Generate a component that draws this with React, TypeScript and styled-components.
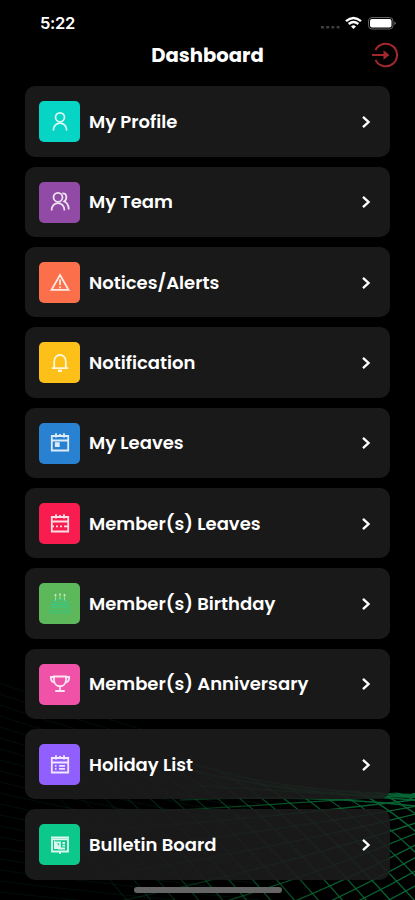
import React from 'react';
import styled, { createGlobalStyle } from 'styled-components';

const GlobalStyle = createGlobalStyle`
  * { box-sizing: border-box; }
  html, body { margin: 0; background: #000; }
  body { font-family: Poppins, Inter, 'Liberation Sans', sans-serif; color: #fff; }
`;

const Screen = styled.main`
  position: relative;
  display: flex;
  flex-direction: column;
  width: 415px;
  height: 900px;
  overflow: hidden;
  background: #000;
`;

const Backdrop = styled.svg`
  position: absolute;
  left: 0;
  bottom: 0;
`;

const StatusBar = styled.div`
  display: flex;
  align-items: center;
  justify-content: space-between;
  height: 40px;
  padding: 6px 19px 0 40px;
`;

const Clock = styled.span`
  font-family: Inter, 'Liberation Sans', sans-serif;
  font-size: 16.5px;
  font-weight: 600;
  line-height: 20px;
  letter-spacing: -0.3px;
`;

const StatusIcons = styled.svg`
  display: block;
`;

const Header = styled.header`
  display: grid;
  grid-template-columns: 1fr auto 1fr;
  align-items: center;
  height: 30px;
  padding: 0 17px;
`;

const Title = styled.h1`
  grid-column: 2;
  margin: 0;
  font-size: 19.6px;
  font-weight: 700;
  line-height: 28px;
`;

const LogoutButton = styled.button`
  justify-self: end;
  padding: 0;
  border: 0;
  background: none;
  height: 26px;
`;

const Menu = styled.nav`
  position: relative;
  display: grid;
  grid-auto-rows: 70.4px;
  gap: 9.95px;
  padding: 16.4px 25px 0;
`;

const Item = styled.a`
  display: flex;
  align-items: center;
  padding: 0.6px 17px 0 14.4px;
  border-radius: 10px;
  background: rgba(28, 28, 28, 0.88);
`;

const Tile = styled.span<{ $color: string }>`
  display: grid;
  place-items: center;
  width: 41px;
  height: 41px;
  margin-right: 8.6px;
  border-radius: 5px;
  background: ${(p) => p.$color};
`;

const Label = styled.span`
  flex: 1;
  font-size: 18px;
  font-weight: 600;
  line-height: 26px;
  white-space: nowrap;
`;

const HomeIndicator = styled.div`
  position: absolute;
  left: 134px;
  bottom: 7px;
  width: 148px;
  height: 6px;
  border-radius: 3px;
  background: #656566;
`;

const calendar = <path d="M3.8 5H20.2V19.5H3.8ZM3.8 9.5H20.2M8 2.3V6.5M12 3V6M16 2.3V6.5" />;

const icons: Record<string, React.ReactNode> = {
  profile: <><circle cx="12" cy="7.3" r="4.5" /><path d="M5.4 20.5C5.4 10.6 18.6 10.6 18.6 20.5" /></>,
  team: <><circle cx="10" cy="7.3" r="4.5" /><path d="M3.6 20.5C3.6 10.6 16.4 10.6 16.4 20.5M14.4 3.4C19 2.6 19.6 8.9 16.2 11.5C18.8 12.6 20.7 15.8 20.7 19.5" /></>,
  alert: <><path d="M12 4L20.5 18.9H3.5Z" /><path d="M12 8.5V14M12 15.5V17.2" /></>,
  bell: <><path d="M3.8 17.2H20.2M6.2 17V10.5C6.2 1.8 17.8 1.8 17.8 10.5V17" /><path d="M10 19.8H14" strokeWidth="2.4" /></>,
  leaves: <>{calendar}<path d="M7.8 12.2H10.8V15.2H7.8Z" fill="currentColor" /></>,
  members: <>{calendar}<path d="M3.8 14.3H6M8 14.3H10M12 14.3H14M16 14.3H20" /></>,
  cake: <g strokeWidth="1.1"><path d="M5.5 8.6Q12 6.6 18.5 8.6L20 12.6H4ZM4.8 10.7H19.2M4 12.6L2.6 16.5V21H21.4V16.5L20 12.6M3 15.2H21M2.6 18.2H21.4" /><path d="M7.5 4.6V8.4M12 4V7.6M16.5 4.6V8.4" stroke="#a3e6a7" /><path d="M7.5 2V4.2M12 1.4V3.6M16.5 2V4.2" stroke="#d3f8cf" strokeWidth="1.7" /></g>,
  trophy: <path d="M6 4.5H18V7.5C18 16.5 6 16.5 6 7.5ZM6 5H2.8C2.8 9 4.8 10.5 7 10.5M18 5H21.2C21.2 9 19.2 10.5 17 10.5M12 14.3V18.5M7.2 19H16.8" />,
  holiday: <>{calendar}<path d="M7 12.8H8.5M11 12.8H17M7 15.8H8.5M11 15.8H17" /></>,
  board: <><path d="M3 4.3H21M4 6.3H20V18.5H4Z" /><path d="M7 9.5H12V15H7ZM14.5 10H17M14.5 12.7H17M10 15.5H17M12 19V21" /><path d="M7 9.5L12 15H7Z" fill="currentColor" /></>,
};

const items = [
  { label: 'My Profile', icon: 'profile', color: '#06d4c4' },
  { label: 'My Team', icon: 'team', color: '#914aa6' },
  { label: 'Notices/Alerts', icon: 'alert', color: '#fb704b' },
  { label: 'Notification', icon: 'bell', color: '#fcc019' },
  { label: 'My Leaves', icon: 'leaves', color: '#2981d1' },
  { label: 'Member(s) Leaves', icon: 'members', color: '#f81d4e' },
  { label: 'Member(s) Birthday', icon: 'cake', color: '#5cb85b' },
  { label: 'Member(s) Anniversary', icon: 'trophy', color: '#f052a8' },
  { label: 'Holiday List', icon: 'holiday', color: '#925fff' },
  { label: 'Bulletin Board', icon: 'board', color: '#0dc88b' },
];

const rising = Array.from({ length: 13 }, (_, i) => {
  const right = 124 + i * 4.5 + i * i * 0.6;
  const slope = Math.min(0.08 + (right - 124) / 110, 0.56);
  const middle = right + slope * 130;
  return `M90 ${middle + slope * 130}Q290 ${middle} 420 ${right}`;
}).join('');
const falling = Array.from({ length: 20 }, (_, i) => {
  const x = -20 + i * 24;
  return `M${x} ${78 + i * 2.5}Q${x + 55} ${118 + i * 0.8} ${x + 155} 240`;
}).join('');
const leftWaves = Array.from({ length: 21 }, (_, i) =>
  `M0 ${13 + i * 11}Q75 ${41 + i * 10} 260 ${94 + i * 8}`
).join('');

function Mesh() {
  return (
    <Backdrop width="415" height="230" viewBox="0 0 415 230" fill="none">
      <defs>
        <linearGradient id="fade" x1="90" x2="415" y1="0" y2="0" gradientUnits="userSpaceOnUse">
          <stop stopColor="#07582f" stopOpacity="0.12" />
          <stop offset="0.55" stopColor="#08652f" stopOpacity="0.75" />
          <stop offset="1" stopColor="#076636" />
        </linearGradient>
        <clipPath id="surface"><path d="M60 70Q170 82 225 102Q290 121 415 123V230H60Z" /></clipPath>
      </defs>
      <path d={leftWaves} stroke="#073d26" strokeWidth="0.8" opacity="0.3" />
      <g clipPath="url(#surface)" stroke="url(#fade)" strokeWidth="1.3">
        <path d={rising} />
        <path d={falling} />
        <path d="M180 89Q265 121 415 125M190 100Q290 125 415 127" strokeWidth="2" />
        <path d="M200 116Q310 122 415 130M180 130Q310 124 415 136" />
      </g>
    </Backdrop>
  );
}

export default function App() {
  return (
    <Screen>
      <GlobalStyle />
      <Mesh />
      <StatusBar>
        <Clock>5:22</Clock>
        <StatusIcons width="76" height="16" viewBox="0 0 76 16" fill="none">
          <path d="M1 12.2H20" stroke="#3d3d3d" strokeWidth="2.4" strokeDasharray="3 2.2" />
          <path d="M26 6.2Q33.5-.3 41 6.2M28.7 9Q33.5 5 38.3 9" stroke="#fff" strokeWidth="2.4" />
          <path d="M31 11.5Q33.5 9.2 36 11.5L33.5 14Z" fill="#fff" />
          <rect x="48.5" y="2.5" width="24.5" height="11.5" rx="3.5" stroke="#666" />
          <rect x="50" y="4" width="21.5" height="8.5" rx="2" fill="#fff" />
          <path d="M74.5 6.5Q76.5 8.2 74.5 10Z" fill="#999" />
        </StatusIcons>
      </StatusBar>
      <Header>
        <Title>Dashboard</Title>
        <LogoutButton aria-label="Log out">
          <svg width="26" height="26" viewBox="0 0 26 26" fill="none" stroke="#a3282d" strokeWidth="2">
            <path d="M3.5 8.2A11.3 11.3 0 1 1 3.5 17.8M0 13H14" />
            <path d="M11.5 8.2L17.5 13L11.5 17.8Z" fill="#a3282d" stroke="none" />
          </svg>
        </LogoutButton>
      </Header>
      <Menu>
        {items.map((item) => (
          <Item key={item.label}>
            <Tile $color={item.color}>
              <svg width="24" height="24" viewBox="0 0 24 24" fill="none" stroke={item.icon === 'cake' ? '#34c98a' : 'currentColor'} strokeWidth="1.8" opacity="0.85">
                {icons[item.icon]}
              </svg>
            </Tile>
            <Label>{item.label}</Label>
            <svg width="14" height="16" viewBox="0 0 14 16" fill="none" stroke="#fff" strokeWidth="2.4">
              <path d="M4 2.8L9.5 8L4 13.2" />
            </svg>
          </Item>
        ))}
      </Menu>
      <HomeIndicator />
    </Screen>
  );
}
